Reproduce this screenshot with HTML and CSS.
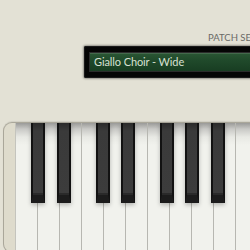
FILE: index.html
```html
<!DOCTYPE html>
<html>
<head>
<meta charset="utf-8">
<link rel="stylesheet" href="styles.css">
</head>
<body>
<div class="panel">
  <div class="header">
    <div class="patch">
      <div class="label">PATCH SELECT</div>
      <div class="display"><div class="screen">Giallo Choir - Wide</div></div>
    </div>
  </div>
  <div class="keyboard">
    <div class="keys">
      <div class="white"></div><div class="white"></div><div class="white"></div><div class="white"></div>
      <div class="white"></div><div class="white"></div><div class="white"></div><div class="white"></div>
      <div class="white"></div><div class="white"></div><div class="white"></div><div class="white"></div>
      <div class="black" style="left:15px"></div>
      <div class="black" style="left:41px"></div>
      <div class="black" style="left:80px"></div>
      <div class="black" style="left:105px"></div>
      <div class="black" style="left:144px"></div>
      <div class="black" style="left:169px"></div>
      <div class="black" style="left:195px"></div>
    </div>
  </div>
</div>
</body>
</html>
```

FILE: styles.css
```css
html, body {
  margin: 0;
  padding: 0;
  background: #e3e1d5;
}
.panel {
  width: 250px;
  height: 250px;
  overflow: hidden;
  font-family: Lato, "Open Sans", sans-serif;
}
.header {
  height: 122px;
  padding-left: 84px;
  box-sizing: border-box;
}
.patch {
  width: 260px;
  padding-top: 32px;
}
.label {
  padding-left: 124px;
  font-size: 9.5px;
  line-height: 12px;
  color: #6a6a66;
  letter-spacing: 0;
  white-space: nowrap;
  height: 14px;
}
.display {
  height: 32px;
  box-sizing: border-box;
  padding: 7px 0 7px 6px;
  background: #050505;
  border-radius: 2px 0 0 2px;
  box-shadow: 0 0 2px 1px rgba(0,0,0,0.35), inset 0 0 0 1px #1a1a1a;
}
.screen {
  height: 18px;
  box-sizing: border-box;
  padding-left: 4px;
  background: linear-gradient(#2a5634 0%, #204a2b 40%, #183d22 100%);
  box-shadow: 0 0 0 1px #2b2b2b, inset 0 1px 0 rgba(255,255,255,0.12);
  color: #d7e0d2;
  font-size: 11px;
  letter-spacing: -0.1px;
  line-height: 18px;
  white-space: nowrap;
}
.keyboard {
  margin-left: 3px;
  height: 131px;
  border: 1px solid #aaa79a;
  border-right: none;
  border-radius: 9px 0 0 9px;
  background: #dedbcc;
  padding-left: 12px;
  box-sizing: border-box;
  box-shadow: 0 -1px 1px rgba(0,0,0,0.08);
}
.keys {
  position: relative;
  display: flex;
  height: 100%;
  border-left: 1px solid #c4c4bd;
  margin-left: -1px;
}
.white {
  flex: 0 0 22px;
  box-sizing: border-box;
  border-right: 1px solid #b7b7b1;
  background: linear-gradient(#9a9a98 0px, #c9c9c6 6px, #e8e9e4 14px, #f1f2ed 22px, #f1f2ed 100%);
}
.black {
  position: absolute;
  top: 0;
  width: 14px;
  height: 80px;
  box-sizing: border-box;
  border-left: 2px solid #121212;
  border-right: 2px solid #121212;
  border-bottom: 8px solid #1c1c1c;
  background: linear-gradient(#2a2a2a 0px, #3a3a3a 8px, #3c3c3c 100%);
  box-shadow: 0 2px 4px rgba(0,0,0,0.25), inset 0 -2px 0 #2a2a2a;
}
```
